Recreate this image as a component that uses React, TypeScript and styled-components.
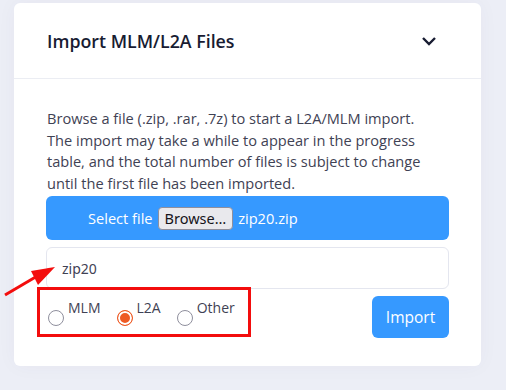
import styled, { createGlobalStyle } from "styled-components";

const GlobalStyle = createGlobalStyle`
  body {
    margin: 0;
    background: #eceef6;
    font-family: "Open Sans", "Noto Sans", sans-serif;
  }
`;

const RADIOS = [
  { id: "mlm", label: "MLM", checked: false },
  { id: "l2a", label: "L2A", checked: true },
  { id: "other", label: "Other", checked: false },
];

const App = () => {
  return (
    <>
      <GlobalStyle />
      <Page>
        <Card>
          <CardHeader>
            <Title>Import MLM/L2A Files</Title>
            <svg width="16" height="10" viewBox="0 0 16 10">
              <polyline
                points="2,2 8,8 14,2"
                fill="none"
                stroke="#181c32"
                strokeWidth="2.4"
              />
            </svg>
          </CardHeader>
          <CardBody>
            <Intro>
              Browse a file (.zip, .rar, .7z) to start a L2A/MLM import.
              <br />
              The import may take a while to appear in the progress
              <br />
              table, and the total number of files is subject to change
              <br />
              until the first file has been imported.
            </Intro>
            <FileBar>
              <span>Select file</span>
              <BrowseButton type="button">Browse…</BrowseButton>
              <span>zip20.zip</span>
            </FileBar>
            <NameInput defaultValue="zip20" />
            <ActionRow>
              <RadioGroup>
                {RADIOS.map((r) => (
                  <RadioItem key={r.id}>
                    <RadioDot $checked={r.checked} />
                    <RadioLabel>{r.label}</RadioLabel>
                  </RadioItem>
                ))}
                <Highlight />
              </RadioGroup>
              <ImportButton type="button">Import</ImportButton>
            </ActionRow>
          </CardBody>
        </Card>
        <Arrow width="60" height="60" viewBox="0 0 60 60">
          <line x1="2" y1="36" x2="36" y2="16" stroke="#f30d0d" strokeWidth="3" />
          <polygon points="52,8 28,12 35,26" fill="#f30d0d" />
        </Arrow>
      </Page>
    </>
  );
};

const Page = styled.div`
  position: relative;
  width: 506px;
  height: 390px;
  padding: 3px 25px 0 14px;
  box-sizing: border-box;
`;

const Card = styled.div`
  background: #ffffff;
  border-radius: 6px;
  height: 363px;
  box-shadow: 0 0 20px 0 rgba(82, 63, 105, 0.04);
`;

const CardHeader = styled.div`
  height: 75px;
  padding: 0 44px 0 33px;
  display: flex;
  align-items: center;
  justify-content: space-between;
  border-bottom: 1px solid #ebedf3;
`;

const Title = styled.h3`
  margin: 0;
  font-size: 17.8px;
  font-weight: 600;
  color: #181c32;
`;

const CardBody = styled.div`
  padding: 29px 32px 0 32px;
`;

const Intro = styled.p`
  margin: 0 0 0 1px;
  font-size: 14.6px;
  line-height: 21.5px;
  color: #3f4254;
  white-space: nowrap;
`;

const FileBar = styled.div`
  margin-top: 2px;
  height: 44px;
  background: #3699ff;
  border-radius: 6px;
  display: flex;
  align-items: center;
  gap: 5px;
  padding-left: 42px;
  color: #ffffff;
  font-size: 14.6px;
`;

const BrowseButton = styled.button`
  height: 23px;
  padding: 0 6px;
  border: 1px solid #8f8f9d;
  border-radius: 4px;
  background: #e9e9ed;
  color: #15141a;
  font-family: "Noto Sans", sans-serif;
  font-size: 14.5px;
`;

const NameInput = styled.input`
  display: block;
  margin-top: 7px;
  width: 100%;
  height: 42px;
  box-sizing: border-box;
  border: 1px solid #e4e6ef;
  border-radius: 6px;
  padding: 0 15px;
  font-family: "Noto Sans", sans-serif;
  font-size: 14px;
  color: #3f4254;
  outline: none;
`;

const ActionRow = styled.div`
  margin-top: 7px;
  display: flex;
  justify-content: space-between;
  align-items: flex-start;
`;

const RadioGroup = styled.div`
  position: relative;
  display: flex;
  gap: 16px;
  padding: 2px 0 0 2px;
`;

const Highlight = styled.div`
  position: absolute;
  left: -9px;
  top: -9px;
  width: 214px;
  height: 50px;
  box-sizing: border-box;
  border: 3px solid #f30d0d;
`;

const RadioItem = styled.label`
  display: flex;
  align-items: flex-start;
  gap: 4px;
`;

const RadioDot = styled.span<{ $checked: boolean }>`
  margin-top: 12px;
  width: 16px;
  height: 16px;
  box-sizing: border-box;
  border-radius: 50%;
  border: ${(p) => (p.$checked ? "1.5px solid #ee5a24" : "1.5px solid #8f8f9d")};
  background: ${(p) => (p.$checked ? "#ee5a24" : "#ffffff")};
  box-shadow: ${(p) => (p.$checked ? "inset 0 0 0 2px #ffffff" : "none")};
`;

const RadioLabel = styled.span`
  font-size: 14px;
  line-height: 20px;
  color: #3f4254;
`;

const ImportButton = styled.button`
  width: 77px;
  height: 42px;
  border: none;
  border-radius: 6px;
  background: #3699ff;
  color: #ffffff;
  font-family: "Open Sans", sans-serif;
  font-size: 15.5px;
`;

const Arrow = styled.svg`
  position: absolute;
  left: 3px;
  top: 259px;
`;

export default App;
